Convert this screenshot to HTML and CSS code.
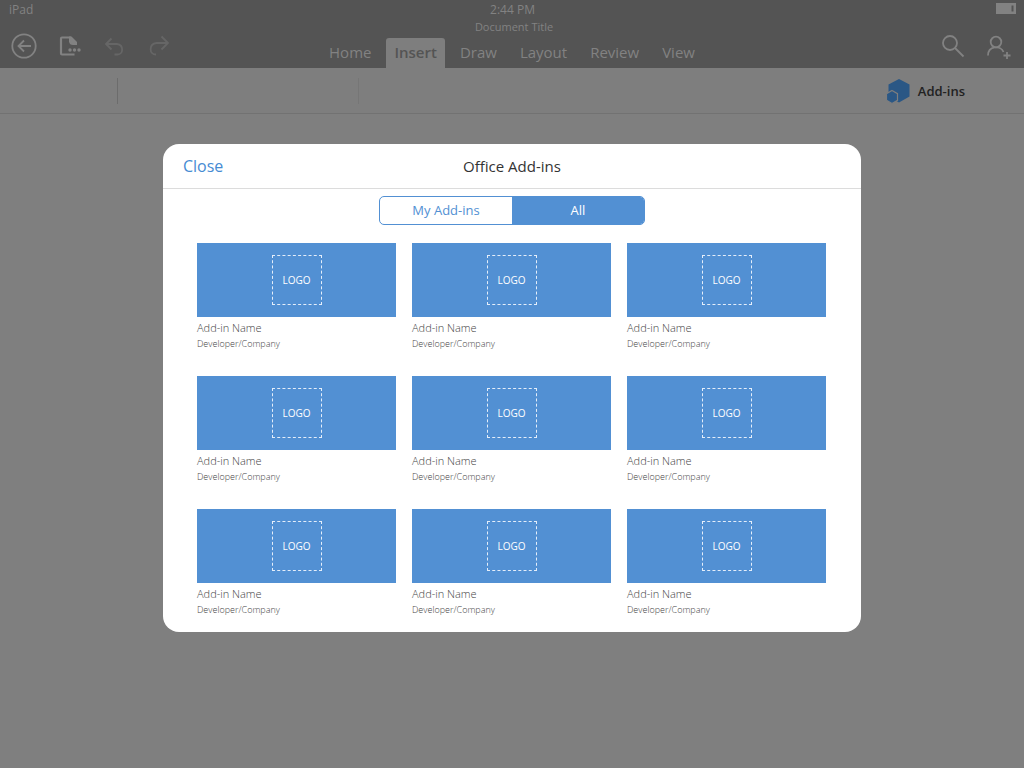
FILE: index.html
```html
<!DOCTYPE html>
<html lang="en">
<head>
<meta charset="utf-8">
<meta name="viewport" content="width=device-width, initial-scale=1">
<title>Office Add-ins</title>
<link rel="stylesheet" href="styles.css">
</head>
<body>
<header class="app-header">
  <div class="status-bar">
    <span>iPad</span>
    <span>2:44 PM</span>
    <svg class="battery" width="20" height="11" viewBox="0 0 20 11" aria-label="Battery"><path fill="currentColor" fill-rule="evenodd" d="M0 0h20v11H0zM15.500 2.500v6h2v-6z"/></svg>
  </div>
  <div class="nav-bar">
    <div class="tools">
      <button class="tool" aria-label="Back"><svg width="26" height="26" viewBox="0 0 26 26"><circle cx="13" cy="13" r="11.700"/><path d="M20 13H7.500M13 7.500 7.500 13l5.500 5.500"/></svg></button>
      <button class="tool" aria-label="File"><svg width="26" height="26" viewBox="0 0 26 26"><path class="thick" d="M18.500 21.500H6Q5 21.500 5 20.500V5.500Q5 4.500 6 4.500h9"/><path class="solid" d="M13 3.500h2.500l5.500 5.500v3h-4q-3.500 0-4-3.500z"/><circle class="solid" cx="14" cy="17" r="1.700"/><circle class="solid" cx="18.500" cy="17" r="1.700"/><circle class="solid" cx="23" cy="17" r="1.700"/></svg></button>
      <button class="tool tool-disabled" aria-label="Undo" disabled><svg width="26" height="26" viewBox="0 0 26 26"><path d="M10.500 5.500 5 11l5.500 5.500M5 11h11c7 1 6.500 10.500.500 10.500h-3"/></svg></button>
      <button class="tool tool-disabled" aria-label="Redo" disabled><svg width="26" height="26" viewBox="0 0 26 26"><path d="M15.500 3.500 22 10l-6.500 6.500M22 10H10.500c-8 1-7.500 11.500-.5 11.500"/></svg></button>
    </div>
    <div class="center">
      <div class="doc-title">Document Title</div>
      <nav class="tabs">
        <button class="tab">Home</button>
        <button class="tab tab-active">Insert</button>
        <button class="tab">Draw</button>
        <button class="tab">Layout</button>
        <button class="tab">Review</button>
        <button class="tab">View</button>
      </nav>
    </div>
    <div class="tools tools-end">
      <button class="tool" aria-label="Search"><svg width="26" height="26" viewBox="0 0 26 26"><circle cx="10" cy="10" r="7"/><path d="m15 15 8.500 8.500"/></svg></button>
      <button class="tool" aria-label="Share"><svg width="26" height="26" viewBox="0 0 26 26"><circle cx="11" cy="9" r="5.300"/><path d="M3 22.500c0-10 13-10.500 15.500-3.500M22 19v7M18.500 22.500h7"/></svg></button>
    </div>
  </div>
</header>
<div class="ribbon">
  <span class="divider"></span>
  <span class="divider divider-faint"></span>
  <button class="addins-button">
    <svg width="24" height="26" viewBox="0 0 24 26" aria-hidden="true"><path fill="#2a5785" d="m13 1 10.500 5.500v12L13 24.500 2.500 18.500v-12z"/><path fill="#2a5785" stroke="#7e7e7e" stroke-width="1.200" d="m6 12.500 5.500 3.200v6.600L6 25.500.5 22.300v-6.600z"/></svg>
    Add-ins
  </button>
</div>
<div class="overlay">
  <section class="modal" role="dialog" aria-modal="true" aria-labelledby="modal-title">
    <div class="modal-header">
      <button class="close">Close</button>
      <h1 class="modal-title" id="modal-title">Office Add-ins</h1>
    </div>
    <div class="segmented">
      <button class="segment" aria-pressed="false">My Add-ins</button>
      <button class="segment segment-active" aria-pressed="true">All</button>
    </div>
    <div class="grid">
      <article class="card"><div class="banner"><span class="logo">LOGO</span></div><h2 class="name">Add-in Name</h2><p class="company">Developer/Company</p></article>
      <article class="card"><div class="banner"><span class="logo">LOGO</span></div><h2 class="name">Add-in Name</h2><p class="company">Developer/Company</p></article>
      <article class="card"><div class="banner"><span class="logo">LOGO</span></div><h2 class="name">Add-in Name</h2><p class="company">Developer/Company</p></article>
      <article class="card"><div class="banner"><span class="logo">LOGO</span></div><h2 class="name">Add-in Name</h2><p class="company">Developer/Company</p></article>
      <article class="card"><div class="banner"><span class="logo">LOGO</span></div><h2 class="name">Add-in Name</h2><p class="company">Developer/Company</p></article>
      <article class="card"><div class="banner"><span class="logo">LOGO</span></div><h2 class="name">Add-in Name</h2><p class="company">Developer/Company</p></article>
      <article class="card"><div class="banner"><span class="logo">LOGO</span></div><h2 class="name">Add-in Name</h2><p class="company">Developer/Company</p></article>
      <article class="card"><div class="banner"><span class="logo">LOGO</span></div><h2 class="name">Add-in Name</h2><p class="company">Developer/Company</p></article>
      <article class="card"><div class="banner"><span class="logo">LOGO</span></div><h2 class="name">Add-in Name</h2><p class="company">Developer/Company</p></article>
    </div>
  </section>
</div>
</body>
</html>
```
FILE: styles.css
```css
* { box-sizing: border-box; }

body {
  margin: 0;
  min-height: 100vh;
  background: #7f7f7f;
  font-family: "Open Sans", "Noto Sans", sans-serif;
}

button {
  margin: 0;
  padding: 0;
  border: 0;
  background: none;
  color: inherit;
  font: inherit;
}

h1, h2, p { margin: 0; font-weight: 400; }

.app-header { background: #545454; color: #828282; }

.status-bar {
  display: grid;
  grid-template-columns: 1fr auto 1fr;
  align-items: center;
  height: 20px;
  padding: 0 8px 0 9px;
  font-size: 12px;
  line-height: 20px;
}

.battery { justify-self: end; margin-bottom: 3px; }

.nav-bar {
  display: grid;
  grid-template-columns: 1fr auto 1fr;
  height: 48px;
}

.tools {
  display: flex;
  align-items: center;
  gap: 19px;
  padding: 4px 13px 0 11px;
}

.tools-end { justify-content: flex-end; }

.tool { display: block; width: 26px; height: 26px; }
.tool-disabled { color: #666; }

.tool svg {
  display: block;
  fill: none;
  stroke: currentColor;
  stroke-width: 1.800;
}

.tool .thick { stroke-width: 2.200; }
.tool .solid { fill: currentColor; stroke: none; }

.center {
  display: flex;
  flex-direction: column;
  justify-content: space-between;
}

.doc-title {
  padding-left: 4px;
  text-align: center;
  font-size: 11px;
  line-height: 13px;
}

.tabs { display: flex; gap: 7px; }

.tab {
  height: 30px;
  padding: 0 8px 2px;
  border-radius: 3px 3px 0 0;
  font-size: 15px;
  line-height: 28px;
}

.tab-active { background: #7e7e7e; color: #545454; font-weight: 600; }

.ribbon {
  display: flex;
  align-items: center;
  height: 46px;
  padding: 0 59px 0 117px;
  border-bottom: 1px solid #727272;
  background: #7e7e7e;
}

.divider {
  width: 1px;
  height: 26px;
  margin-right: 240px;
  background: #6c6c6c;
}

.divider-faint { background: #767676; }

.addins-button {
  display: flex;
  align-items: center;
  gap: 8px;
  margin-left: auto;
  color: #222;
  font-size: 13px;
  font-weight: 600;
  line-height: 18px;
  white-space: nowrap;
}

.overlay {
  position: absolute;
  inset: 0;
  display: grid;
  place-items: center;
  padding: 24px 16px 16px;
}

.modal {
  width: 100%;
  max-width: 698px;
  border-radius: 16px;
  background: #fff;
  overflow: hidden;
}

.modal-header {
  display: grid;
  grid-template-columns: 1fr auto 1fr;
  align-items: center;
  height: 45px;
  padding: 0 20px;
  border-bottom: 1px solid #dcdcdc;
}

.close {
  justify-self: start;
  color: #468bd3;
  font-size: 16px;
}

.modal-title { color: #333; font-size: 15px; }

.segmented {
  display: grid;
  grid-template-columns: 1fr 1fr;
  width: 266px;
  margin: 7px auto 18px;
  border: 1px solid #5290d3;
  border-radius: 5px;
  overflow: hidden;
}

.segment {
  color: #5290d3;
  font-size: 13px;
  line-height: 27px;
}

.segment-active { background: #5290d3; color: #fff; }

.grid {
  display: grid;
  grid-template-columns: repeat(3, 1fr);
  gap: 24px 16px;
  padding: 0 35px 14px 34px;
}

.banner {
  display: grid;
  place-items: center;
  height: 74px;
  margin-bottom: 3px;
  background: #5290d3;
}

.logo {
  display: grid;
  place-items: center;
  width: 50px;
  height: 50px;
  border: 1px dashed #e4eefa;
  color: #fff;
  font-size: 10px;
}

.name { color: #444; font-size: 11px; font-weight: 300; line-height: 16px; }
.company { color: #444; font-size: 9px; font-weight: 300; line-height: 16px; }
```
